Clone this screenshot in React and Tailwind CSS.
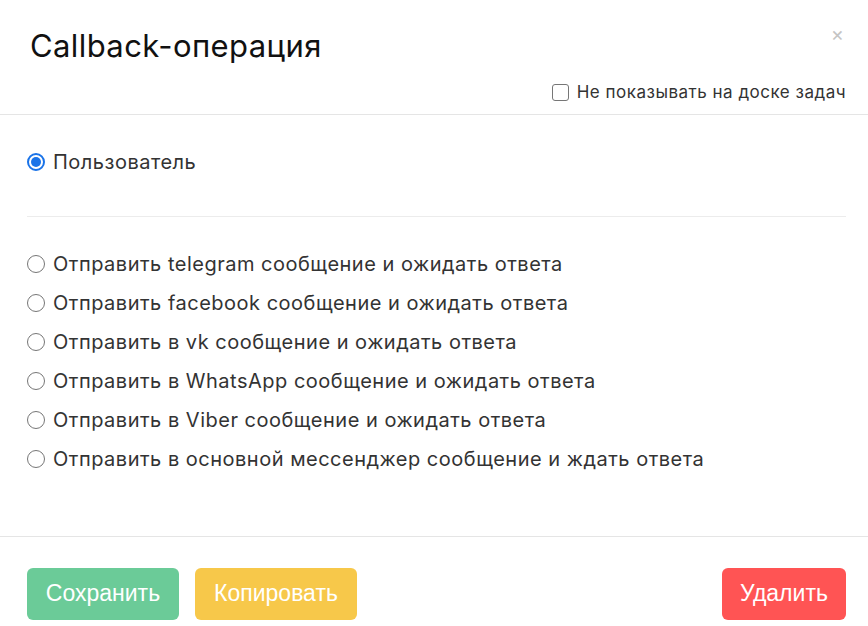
import React, { useState } from 'react';

const options = [
  'Отправить telegram сообщение и ожидать ответа',
  'Отправить facebook сообщение и ожидать ответа',
  'Отправить в vk сообщение и ожидать ответа',
  'Отправить в WhatsApp сообщение и ожидать ответа',
  'Отправить в Viber сообщение и ожидать ответа',
  'Отправить в основной мессенджер сообщение и ждать ответа',
];

const Radio = ({ checked }) => (
  <span
    className={
      checked
        ? 'w-[18px] h-[18px] rounded-full border-[2px] border-[#1a73e8] flex items-center justify-center shrink-0'
        : 'w-[18px] h-[18px] rounded-full border border-[#767676] shrink-0'
    }
  >
    {checked && <span className="w-[10px] h-[10px] rounded-full bg-[#1a73e8]" />}
  </span>
);

export default function App() {
  const [selected, setSelected] = useState(-1);

  return (
    <div className="w-[868px] h-[626px] bg-white text-[#222] font-['Inter',sans-serif] flex flex-col">
      {/* header */}
      <div className="relative pl-[30px] pr-[22px] pt-[26px] pb-[8px] border-b border-[#e5e5e5]">
        <h1 className="text-[31px] leading-[40px] tracking-[0.4px] text-[#111] font-normal">Callback-операция</h1>
        <button className="absolute right-[24px] top-[24px] text-[#c4c4c4] text-[20px] leading-none">×</button>
        <label className="flex items-center justify-end gap-[8px] mt-[14px] text-[17px] tracking-[0.5px] text-[#333]">
          <span className="w-[17px] h-[17px] rounded-[3px] border border-[#767676]" />
          Не показывать на доске задач
        </label>
      </div>

      {/* body */}
      <div className="flex-1 pl-[27px] pr-[22px] border-b border-[#e5e5e5]">
        <div
          className="flex items-center gap-[8px] pt-[35px] pb-[42px] leading-[24px] border-b border-[#ececec] text-[20px] tracking-[0.5px] text-[#333]"
          onClick={() => setSelected(-1)}
        >
          <Radio checked={selected === -1} />
          Пользователь
        </div>
        <div className="flex flex-col gap-[15px] pt-[35px]">
          {options.map((o, i) => (
            <div
              key={i}
              className="flex items-center gap-[8px] h-[24px] text-[20px] tracking-[0.5px] text-[#333]"
              onClick={() => setSelected(i)}
            >
              <Radio checked={selected === i} />
              {o}
            </div>
          ))}
        </div>
      </div>

      {/* footer */}
      <div className="flex items-center gap-[16px] px-[27px] pt-[30px] pb-[6px] h-[89px] font-['Liberation_Sans',sans-serif] text-[23px] text-white">
        <button className="h-[52px] w-[152px] rounded-[6px] bg-[#6bcb98]">Сохранить</button>
        <button className="h-[52px] w-[162px] rounded-[6px] bg-[#f7c84a]">Копировать</button>
        <button className="ml-auto h-[52px] w-[124px] rounded-[6px] bg-[#ff5454] mr-[-5px]">Удалить</button>
      </div>
    </div>
  );
}
